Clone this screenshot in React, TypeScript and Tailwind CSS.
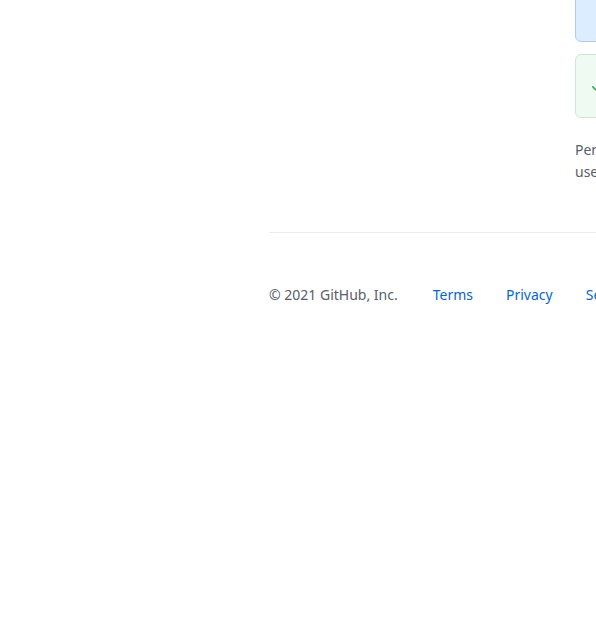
export default function App() {
  return (
    <div className="w-[596px] h-[628px] overflow-hidden bg-white" style={{ fontFamily: '"Noto Sans", "Open Sans", "Liberation Sans", sans-serif' }}>
      <div className="w-[1100px] pl-[269px] -mt-[30px]">
        <div className="ml-[306px] w-[500px]">
          <div className="h-[72px] rounded-[6px] border border-[#b3cde9] bg-[#dbedff]" />
          <div className="mt-[12px] h-[64px] rounded-[6px] border border-[#cde6d3] bg-[#effaf2] flex items-center px-[14px]">
            <svg width="16" height="16" viewBox="0 0 16 16" fill="#22a447">
              <path d="M13.78 4.22a.75.75 0 010 1.06l-7.25 7.25a.75.75 0 01-1.06 0L2.22 9.28a.75.75 0 011.06-1.06L6 10.94l6.72-6.72a.75.75 0 011.06 0z" />
            </svg>
          </div>
          <p className="mt-[21px] text-[14px] leading-[22px] text-[#586069] whitespace-nowrap">
            Personal access tokens function like ordinary OAuth access tokens. They can be
            <br />
            used instead of a password for Git over HTTPS.
          </p>
        </div>
        <div className="mt-[49px] border-t border-[#eaecef] w-[800px]" />
        <div className="mt-[51px] flex items-center text-[14px] leading-[22px]">
          <span className="text-[#586069]">© 2021 GitHub, Inc.</span>
          <a className="ml-[35px] text-[#0366d6]">Terms</a>
          <a className="ml-[33px] text-[#0366d6]">Privacy</a>
          <a className="ml-[33px] text-[#0366d6]">Security</a>
          <a className="ml-[33px] text-[#0366d6]">Status</a>
        </div>
      </div>
    </div>
  );
}
